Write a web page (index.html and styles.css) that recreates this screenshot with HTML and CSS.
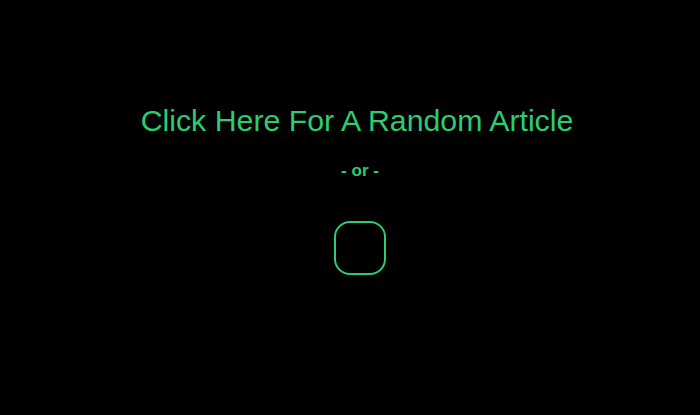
FILE: index.html
```html
<!DOCTYPE html>
<html>
<head>
<meta charset="utf-8">
<link rel="stylesheet" href="styles.css">
</head>
<body>
<main class="page">
  <a class="title" href="#">Click Here For A Random Article</a>
  <div class="or">- or -</div>
  <button class="box" type="button" aria-label="random"></button>
</main>
</body>
</html>
```
FILE: styles.css
```css
html, body {
  margin: 0;
  padding: 0;
  background: #000;
  height: 100%;
}
.page {
  display: flex;
  flex-direction: column;
  align-items: center;
  padding-top: 102px;
  padding-left: 20px;
  font-family: "Liberation Sans", Arial, sans-serif;
  color: #2ecc71;
}
.title {
  color: #2ecc71;
  text-decoration: none;
  font-size: 30.3px;
  line-height: 38px;
  margin-right: 6px;
}
.or {
  margin-top: 21px;
  font-size: 17px;
  font-weight: bold;
  line-height: 20px;
}
.box {
  margin-top: 40px;
  width: 52px;
  height: 54px;
  border: 2px solid #2ecc71;
  border-radius: 16px;
  background: transparent;
  padding: 0;
}
```
